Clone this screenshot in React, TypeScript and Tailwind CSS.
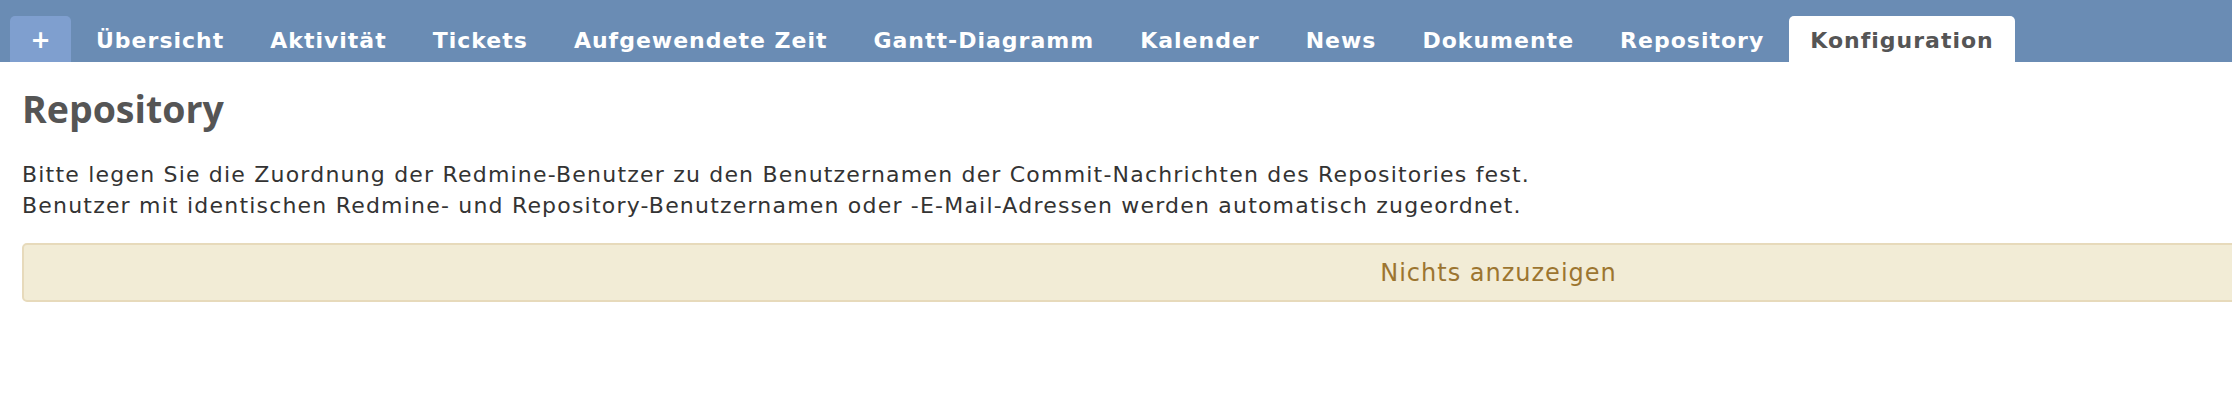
import React from 'react';

const tabs = [
  'Übersicht',
  'Aktivität',
  'Tickets',
  'Aufgewendete Zeit',
  'Gantt-Diagramm',
  'Kalender',
  'News',
  'Dokumente',
  'Repository',
];

const verdana = { fontFamily: '"DejaVu Sans", Verdana, sans-serif' };

export default function App() {
  return (
    <div className="w-full h-[416px] overflow-hidden bg-white" style={verdana}>
      {/* main menu */}
      <div className="h-[62px] bg-[#6a8cb4] flex items-end pl-[10px] gap-[4px] whitespace-nowrap">
        <div className="h-[46px] w-[61px] rounded-t-[5px] bg-[#7f9fcf] flex items-center justify-center text-white text-[24px] font-bold pt-[1px]">
          +
        </div>
        {tabs.map((t) => (
          <div
            key={t}
            className="h-[46px] px-[21px] flex items-center text-white text-[22px] tracking-[1px] font-bold pt-[2px]"
          >
            {t}
          </div>
        ))}
        <div className="h-[46px] px-[21px] flex items-center bg-white rounded-t-[5px] text-[#555] text-[22px] tracking-[1px] font-bold pt-[2px]">
          Konfiguration
        </div>
      </div>

      {/* content */}
      <div className="px-[22px] w-[2997px]">
        <h2
          className="text-[37.5px] font-bold text-[#555] leading-[44px] mt-[25px]"
          style={{ fontFamily: '"Open Sans", "Noto Sans", sans-serif' }}
        >
          Repository
        </h2>
        <p className="mt-[28px] text-[22px] tracking-[1.2px] leading-[31px] text-[#333]">
          Bitte legen Sie die Zuordnung der Redmine-Benutzer zu den Benutzernamen der Commit-Nachrichten des Repositories fest.
          <br />
          Benutzer mit identischen Redmine- und Repository-Benutzernamen oder -E-Mail-Adressen werden automatisch zugeordnet.
        </p>
        <div className="mt-[22px] h-[59px] border-2 border-[#e7dabb] bg-[#f2ecd6] rounded-[5px] flex items-center justify-center text-[24px] tracking-[1px] text-[#9c7530]">
          Nichts anzuzeigen
        </div>
      </div>
    </div>
  );
}
